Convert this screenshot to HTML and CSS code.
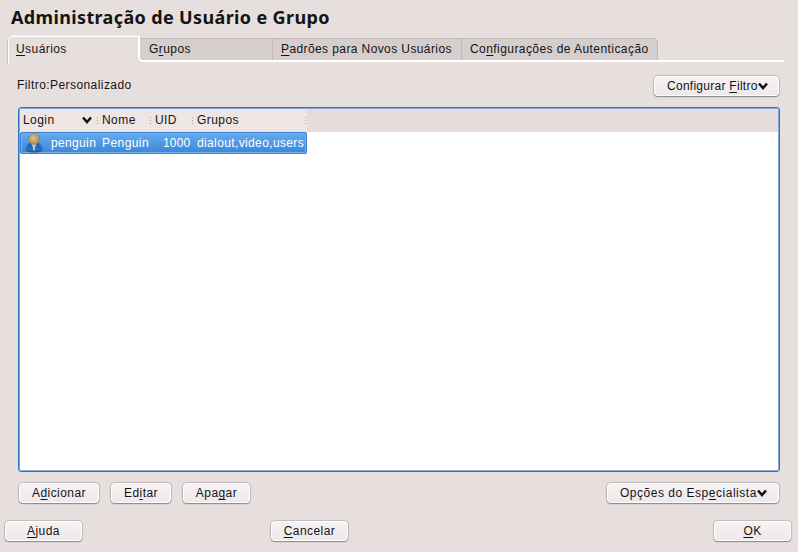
FILE: index.html
```html
<!DOCTYPE html>
<html lang="pt-BR">
<head>
<meta charset="utf-8">
<title>Administração de Usuário e Grupo</title>
<link rel="stylesheet" href="styles.css">
</head>
<body>
<h1>Administração de Usuário e Grupo</h1>
<nav class="tabs">
  <a class="tab active"><u>U</u>suários</a>
  <div class="inactive">
    <a class="tab groups">G<u>r</u>upos</a>
    <a class="tab defaults"><u>P</u>adrões para Novos Usuários</a>
    <a class="tab auth">Co<u>n</u>figurações de Autenticação</a>
  </div>
</nav>
<main>
  <div class="filter">
    <span class="filter-label">Filtro:Personalizado</span>
    <button class="btn menu filter-btn"><span>Configurar <u>F</u>iltro</span><svg class="chevron" viewBox="0 0 10 8"><path d="M1 1.500 5 6 9 1.500"/></svg></button>
  </div>
  <section class="list">
    <div class="row head">
      <span class="cell login">Login<svg class="chevron" viewBox="0 0 10 8"><path d="M1 1.500 5 6 9 1.500"/></svg></span>
      <span class="cell name">Nome</span>
      <span class="cell uid">UID</span>
      <span class="cell member">Grupos</span>
    </div>
    <div class="row selected">
      <span class="cell login"><svg class="user" viewBox="0 0 18 20">
        <defs>
          <radialGradient id="face" cx=".45" cy=".4" r=".65"><stop offset="0" stop-color="#d9c38c"/><stop offset="1" stop-color="#a5884f"/></radialGradient>
          <linearGradient id="coat" x1="0" y1="0" x2="0" y2="1"><stop offset="0" stop-color="#2360a4"/><stop offset=".75" stop-color="#2d70b8"/><stop offset="1" stop-color="#234f7d"/></linearGradient>
        </defs>
        <path d="M.5 18C.8 12 4 8.500 9 8.500s8.200 3.500 8.500 9.500q-8.500 3-17 0z" fill="url(#coat)"/>
        <path d="M6.800 10.500h4.400L9 18z" fill="#e5eef6"/>
        <path d="M8.300 11.500h1.400l.4 4.500L9 18l-1.100-2z" fill="#a7c5df"/>
        <circle cx="9" cy="6" r="5.500" fill="url(#face)" stroke="#8d7d55" stroke-width=".6"/>
      </svg><span>penguin</span></span>
      <span class="cell name">Penguin</span>
      <span class="cell uid">1000</span>
      <span class="cell member">dialout,video,users</span>
    </div>
  </section>
  <div class="actions">
    <button class="btn add"><span>A<u>d</u>icionar</span></button>
    <button class="btn edit"><span>Ed<u>i</u>tar</span></button>
    <button class="btn delete"><span>Apa<u>g</u>ar</span></button>
    <button class="btn menu expert"><span>Opções do Esp<u>e</u>cialista</span><svg class="chevron" viewBox="0 0 10 8"><path d="M1 1.500 5 6 9 1.500"/></svg></button>
  </div>
</main>
<footer>
  <button class="btn"><span><u>A</u>juda</span></button>
  <button class="btn cancel"><span><u>C</u>ancelar</span></button>
  <button class="btn ok"><span><u>O</u>K</span></button>
</footer>
</body>
</html>
```
FILE: styles.css
```css
* { box-sizing: border-box; }
body {
  margin: 0;
  width: 798px;
  height: 552px;
  overflow: hidden;
  background: #e7dfde;
  color: #141414;
  font: 12px/16px "Liberation Sans", Arial, sans-serif;
  letter-spacing: .43px;
}
u { text-decoration: underline; text-decoration-thickness: 1px; text-underline-offset: 2px; text-decoration-skip-ink: none; }
h1 {
  margin: 0;
  height: 36px;
  padding: 5px 0 0 11px;
  font: bold 18px/24px "Noto Sans", sans-serif;
  letter-spacing: .36px;
}
.tabs { display: flex; width: 784px; height: 28px; padding-left: 8px; }
.tab { white-space: nowrap; }
.tab.active {
  position: relative;
  width: 131px;
  height: 28px;
  padding: 4px 7px 0;
  border: solid #fff;
  border-width: 1.500px 0 0 1px;
  border-radius: 5px 4px 0 0;
  box-shadow: -1px 0 #c9c1c2, 0 -1px #efe9e8;
}
.inactive {
  display: flex;
  flex: 1;
  height: 26px;
  padding-top: 2px;
  border-left: 2px solid #fff;
  border-bottom: 2px solid #fff;
  border-radius: 0 0 0 5px;
  margin-left: -1px;
}
.inactive .tab {
  height: 22px;
  padding: 2px 8px 0;
  background: #d6cecd;
  border-top: 1px solid #c3bbbe;
  border-right: 1px solid #c0b8bb;
}
.inactive .groups { width: 133px; padding-left: 9px; border-bottom-left-radius: 3px; }
.inactive .defaults { width: 189px; letter-spacing: .4px; }
.inactive .auth { width: 196px; border-top-right-radius: 5px; }
main { height: 441px; padding: 11px 18px 0; }
.filter { display: flex; justify-content: space-between; height: 32px; }
.filter-label { padding-top: 2px; margin-left: -1px; }
.btn {
  display: flex;
  align-items: center;
  justify-content: center;
  height: 20px;
  width: 77px;
  padding: 0;
  color: #141414;
  font: inherit;
  letter-spacing: inherit;
  border: 1px solid #fff;
  border-radius: 4px;
  background: linear-gradient(#f7f2f2, #ece9ec);
  box-shadow: 0 1px 1px #8e8889, 0 0 1px 1px #c3bbbb;
}
.chevron { width: 10px; height: 8px; fill: none; stroke: #111; stroke-width: 2.500; }
.menu { justify-content: flex-start; padding-left: 12px; }
.menu span { letter-spacing: .52px; }
.menu .chevron { margin-top: -1px; }
.filter-btn { width: 125px; margin-top: 1px; margin-right: 1px; }
.filter-btn span { letter-spacing: .27px; }
.list {
  height: 365px;
  border: 1px solid #2f72bd;
  outline: 1px solid #80a9d8;
  outline-offset: -2px;
  border-radius: 3px;
  background: #fff;
  padding: 1px;
  overflow: hidden;
}
.row { display: flex; height: 22px; }
.cell { position: relative; display: block; padding: 3px 0 0 3px; white-space: nowrap; }
.login { width: 79px; }
.name { width: 53px; }
.uid { width: 42px; }
.member { width: 113px; }
.head { height: 23px; background: linear-gradient(90deg, #eee6e5 287px, #e5dcdb 287px); }
.head .cell::after {
  content: "";
  position: absolute;
  top: 8px;
  right: 1px;
  width: 1px;
  height: 7px;
  background: repeating-linear-gradient(#aaa2a2 0 1px, transparent 1px 3px);
}
.head .login { display: flex; justify-content: space-between; padding-right: 7px; }
.head .login .chevron { margin-top: 4px; }
.selected {
  width: 287px;
  color: #fff;
  border-radius: 3px;
  background: linear-gradient(#63adf5, #3d85d2);
  box-shadow: inset 0 0 0 1px #3b7fc9, inset 0 0 0 2px #71b3f3;
}
.selected .login { display: flex; padding: 0; }
.user { width: 18px; height: 20px; margin: 1px 8px 0 5px; }
.selected .login span { padding-top: 3px; letter-spacing: .35px; }
.selected .uid { padding-left: 11px; letter-spacing: .2px; }
.selected .member { letter-spacing: .37px; }
.actions { display: flex; margin-top: 11px; gap: 12px; padding: 0 1px; }
.add { width: 80px; }
.edit { width: 60px; }
.delete { width: 67px; }
.expert { width: 172px; margin-left: auto; }
footer { display: flex; padding: 16px 7px 0 5px; }
.cancel { margin-left: 189px; }
.ok { margin-left: auto; }
```
